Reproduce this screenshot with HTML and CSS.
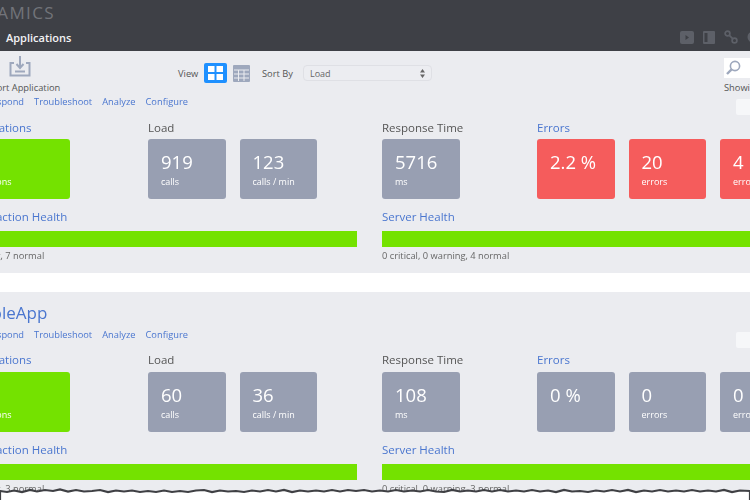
FILE: index.html
```html
<!DOCTYPE html>
<html>
<head>
    <title>Applications</title>
    <link rel="stylesheet" href="styles.css">
</head>
<body>
<div class="page">
    <div class="topbar">
        <div class="logo">APPDYNAMICS</div>
        <div class="nav-row">
            <a class="nav-item">Applications</a>
            <div class="nav-icons">
                <svg width="14" height="13" viewBox="0 0 14 13"><rect width="14" height="13" rx="2" fill="#5d6068"/><path d="M5.5 4l3.5 2.5-3.5 2.5z" fill="#3e4046"/></svg>
                <svg width="12" height="13" viewBox="0 0 12 13"><rect width="12" height="13" rx="1" fill="#5d6068"/><rect x="1.5" y="2" width="3" height="9" fill="#3e4046"/></svg>
                <svg width="14" height="14" viewBox="0 0 14 14" fill="none" stroke="#5d6068" stroke-width="1.7"><circle cx="3.5" cy="3.5" r="2.4"/><circle cx="10.5" cy="10.5" r="2.4"/><path d="M5.3 5.3l3.4 3.4"/></svg>
                <svg width="12" height="12" viewBox="0 0 12 12" fill="none" stroke="#5d6068" stroke-width="3"><circle cx="6" cy="6" r="4"/></svg>
            </div>
        </div>
    </div>

    <div class="panel panel-first">
        <div class="toolbar">
            <div class="import-tool">
                <svg width="22" height="21" viewBox="0 0 22 21" fill="none" stroke="#9ea8bd" stroke-width="2"><path d="M5 7H1.5v12.5h19V7H17"/><path d="M11 0v11"/><path d="M7.5 8l3.5 4 3.5-4"/><path d="M6 15.5h10"/></svg>
                <span>Import Application</span>
            </div>
            <div class="view-tool">
                <span class="tool-label">View</span>
                <div class="view-btn">
                    <svg width="15" height="14" viewBox="0 0 15 14" fill="#fff"><rect width="6.5" height="6"/><rect x="8.5" width="6.5" height="6"/><rect y="8" width="6.5" height="6"/><rect x="8.5" y="8" width="6.5" height="6"/></svg>
                </div>
                <svg class="table-icon" width="17" height="17" viewBox="0 0 17 17"><rect width="17" height="17" rx="1" fill="#9ea8bd"/><path d="M1 5h15M1 9h15M1 13h15M5.5 5v11M11 5v11" stroke="#ebecf0" stroke-width="1"/></svg>
                <span class="tool-label sort-label">Sort By</span>
                <div class="select-box">
                    <span>Load</span>
                    <svg width="5" height="9" viewBox="0 0 5 9" fill="#666"><path d="M2.5 0L5 3.5H0zM2.5 9L0 5.5h5z"/></svg>
                </div>
            </div>
            <div class="search-tool">
                <div class="search-box">
                    <svg width="15" height="15" viewBox="0 0 15 15" fill="none" stroke="#9ea8bd" stroke-width="1.6"><circle cx="9" cy="6" r="4.6"/><path d="M5.6 9.4L1 14" stroke-width="2.4"/></svg>
                </div>
                <span>Showing</span>
            </div>
        </div>
        <div class="links">
            <a>Respond</a><a>Troubleshoot</a><a>Analyze</a><a>Configure</a>
            <div class="mini-box"></div>
        </div>
        <div class="metrics">
            <div>
                <a class="metric-title title-shifted">Applications</a>
                <div class="tiles"><div class="tile tile-green tile-wide"><b>&nbsp;</b><span>applications</span></div></div>
            </div>
            <div>
                <div class="metric-title plain">Load</div>
                <div class="tiles">
                    <div class="tile"><b>919</b><span>calls</span></div>
                    <div class="tile"><b>123</b><span>calls / min</span></div>
                </div>
            </div>
            <div>
                <div class="metric-title plain">Response Time</div>
                <div class="tiles"><div class="tile"><b>5716</b><span>ms</span></div></div>
            </div>
            <div>
                <a class="metric-title">Errors</a>
                <div class="tiles">
                    <div class="tile tile-red"><b>2.2 %</b></div>
                    <div class="tile tile-red"><b>20</b><span>errors</span></div>
                    <div class="tile tile-red"><b>4</b><span>errors</span></div>
                </div>
            </div>
        </div>
        <div class="health">
            <div>
                <a class="metric-title title-shifted">Transaction Health</a>
                <div class="bar"></div>
                <div class="caption caption-clipped">0 critical, 0 warning, 7 normal</div>
            </div>
            <div>
                <a class="metric-title">Server Health</a>
                <div class="bar"></div>
                <div class="caption">0 critical, 0 warning, 4 normal</div>
            </div>
        </div>
    </div>

    <div class="panel panel-second">
        <a class="app-name">SampleApp</a>
        <div class="links">
            <a>Respond</a><a>Troubleshoot</a><a>Analyze</a><a>Configure</a>
            <div class="mini-box"></div>
        </div>
        <div class="metrics">
            <div>
                <a class="metric-title title-shifted">Applications</a>
                <div class="tiles"><div class="tile tile-green tile-wide"><b>&nbsp;</b><span>applications</span></div></div>
            </div>
            <div>
                <div class="metric-title plain">Load</div>
                <div class="tiles">
                    <div class="tile"><b>60</b><span>calls</span></div>
                    <div class="tile"><b>36</b><span>calls / min</span></div>
                </div>
            </div>
            <div>
                <div class="metric-title plain">Response Time</div>
                <div class="tiles"><div class="tile"><b>108</b><span>ms</span></div></div>
            </div>
            <div>
                <a class="metric-title">Errors</a>
                <div class="tiles">
                    <div class="tile"><b>0 %</b></div>
                    <div class="tile"><b>0</b><span>errors</span></div>
                    <div class="tile"><b>0</b><span>errors</span></div>
                </div>
            </div>
        </div>
        <div class="health">
            <div>
                <a class="metric-title title-shifted">Transaction Health</a>
                <div class="bar"></div>
                <div class="caption caption-clipped">0 critical, 0 warning, 3 normal</div>
            </div>
            <div>
                <a class="metric-title">Server Health</a>
                <div class="bar"></div>
                <div class="caption">0 critical, 0 warning, 3 normal</div>
            </div>
        </div>
    </div>

    <svg class="torn-edge" width="750" height="20" viewBox="0 0 750 20">
        <path d="M0 6L7 7L14 5.5L22 7L30 5L37 6.5L45 5L53 6L60 4.5L68 6.5L76 5L84 6.5L92 6L100 5L108 7L116 5.5L124 6.5L132 5.5L140 7L148 6L156 7L164 5.5L172 7L180 6L188 7L196 5.5L204 5L212 7L220 5.5L228 6.5L236 6L244 7L252 5.5L260 6.5L268 5L276 6.5L284 5L292 7L300 5.5L308 6.5L316 5.5L324 6.5L332 5L340 6.5L348 5L356 6L364 5L372 6.5L380 5.5L388 6.5L396 5L404 6.5L412 5.5L420 6.5L428 5L436 6.5L444 7L452 5L460 6.5L468 5.5L476 6.5L484 5L492 6.5L500 5L508 6.5L516 5.5L524 6.5L532 5L540 6.5L548 5.5L556 7L564 5L572 6.5L580 6L588 7L596 5.5L604 6.5L612 5L620 6.5L628 5L636 7L644 5.5L652 6.5L660 5L668 6.5L676 5.5L684 6.5L692 5L700 6.5L708 5.5L716 6.5L724 5L732 7L740 5.5L750 6V20H0Z" fill="#fff" stroke="#3f4044" stroke-width="2.2"/>
    </svg>
</div>
</body>
</html>
```

FILE: styles.css
```css
body {
    margin: 0;
    background-color: #fff;
    overflow: hidden;
    font-family: "Open Sans", sans-serif;
}
a {
    color: #4a76cf;
}
.page {
    position: relative;
    width: 750px;
    height: 500px;
    overflow: hidden;
    filter: blur(0.6px);
}

/* dark header */
.topbar {
    height: 51px;
    background-color: #3e4046;
    overflow: hidden;
}
.logo {
    margin: 3px 0 0 -77px;
    height: 20px;
    font-size: 17px;
    line-height: 20px;
    letter-spacing: 1.4px;
    color: #72747a;
    white-space: nowrap;
}
.nav-row {
    display: flex;
    align-items: center;
    justify-content: space-between;
    height: 16px;
    margin-top: 6px;
    padding-left: 6px;
}
.nav-item {
    color: #f2f2f4;
    font-size: 11px;
    font-weight: 600;
}
.nav-icons {
    display: flex;
    align-items: center;
    gap: 9px;
    margin-right: -9px;
}

/* panels */
.panel {
    background-color: #ebecf0;
    padding-left: 0;
    margin-left: -40px;
    width: 800px;
    box-sizing: border-box;
}
.panel-first {
    height: 222px;
}
.panel-second {
    margin-top: 19px;
    padding-top: 9px;
    height: 220px;
}
.app-name {
    display: block;
    margin-left: -3px;
    font-size: 17px;
    line-height: 24px;
}

/* toolbar */
.toolbar {
    display: flex;
    align-items: flex-start;
    height: 45px;
    font-size: 9.3px;
    color: #555;
}
.import-tool {
    display: flex;
    flex-direction: column;
    align-items: center;
    width: 80px;
    margin: 5px 0 0 20px;
    white-space: nowrap;
}
.import-tool span {
    margin-top: 4px;
}
.view-tool {
    display: flex;
    align-items: center;
    height: 20px;
    margin: 12px 0 0 118px;
}
.tool-label {
    width: 26px;
}
.sort-label {
    width: 41px;
    margin-left: 12px;
}
.view-btn {
    display: flex;
    align-items: center;
    justify-content: center;
    width: 23px;
    height: 20px;
    background-color: #1e90ff;
    border-radius: 2px;
}
.table-icon {
    margin-left: 6px;
}
.select-box {
    display: flex;
    align-items: center;
    justify-content: space-between;
    width: 129px;
    height: 16px;
    box-sizing: border-box;
    padding: 0 6px 0 6px;
    border: 1px solid #dfe0e5;
    border-radius: 4px;
    background-color: #ecedf1;
    color: #666;
    font-size: 9px;
}
.search-tool {
    margin: 7px 0 0 auto;
    width: 36px;
    overflow: hidden;
}
.search-box {
    height: 20px;
    padding: 2px 0 0 2px;
    box-sizing: border-box;
    background-color: #fff;
    margin-bottom: 3px;
}

/* links under the toolbar */
.links {
    display: flex;
    gap: 10px;
    height: 12px;
    margin-left: 26px;
    font-size: 9.3px;
    line-height: 12px;
}
.panel-second .links {
    margin-top: 4px;
}
.mini-box {
    width: 24px;
    height: 16px;
    margin: 3px 0 0 auto;
    background-color: #f6f7f9;
    border-radius: 2px;
}

/* tiles */
.metrics {
    display: grid;
    grid-template-columns: 188px 234px 155px auto;
    margin-top: 13px;
}
.panel-second .metrics {
    margin-top: 12px;
}
.panel-second .tiles {
    margin-top: 5px;
}
.metric-title {
    display: block;
    font-size: 11.5px;
    line-height: 14px;
}
.title-shifted {
    margin-left: 6px;
}
.plain {
    color: #555;
}
.tiles {
    display: flex;
    gap: 14px;
    margin-top: 4px;
}
.tile {
    width: 77.5px;
    height: 60px;
    box-sizing: border-box;
    padding: 11px 0 0 13px;
    background-color: #989fb2;
    border-radius: 3px;
    color: #fff;
    white-space: nowrap;
}
.tile b {
    display: block;
    font-size: 18.5px;
    font-weight: 400;
    line-height: 24px;
}
.tile span {
    display: block;
    margin-top: 2px;
    font-size: 9px;
    line-height: 12px;
}
.tile-green {
    background-color: #74e200;
}
.tile-wide {
    width: 110px;
    padding-left: 1px;
}
.tile-red {
    background-color: #f55c5c;
}

/* health bars */
.health {
    display: grid;
    grid-template-columns: 397px auto;
    column-gap: 25px;
    margin-top: 11px;
}
.bar {
    height: 16px;
    margin-top: 7px;
    background-color: #74e200;
}
.caption {
    margin-top: 3px;
    font-size: 9.3px;
    line-height: 12px;
    color: #666;
    white-space: nowrap;
}
.caption-clipped {
    margin-left: -43px;
}

/* ripped bottom edge of the screenshot */
.torn-edge {
    position: absolute;
    left: 0;
    top: 485px;
}
```
